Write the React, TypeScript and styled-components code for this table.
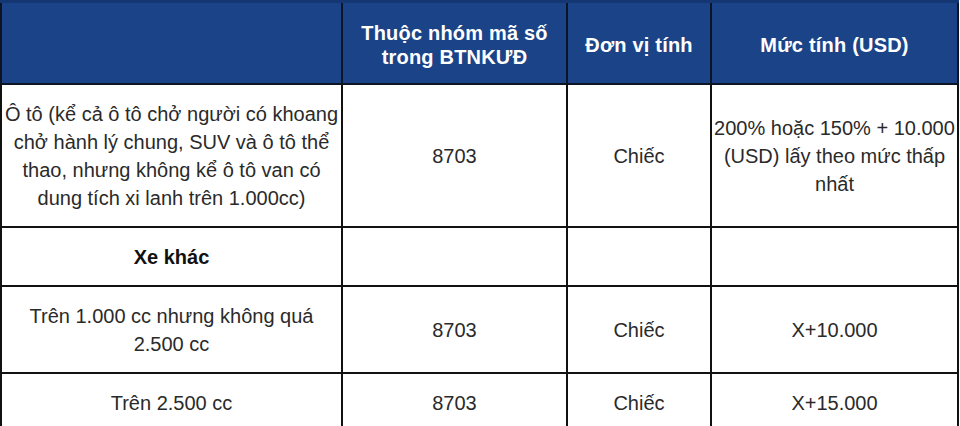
import styled, { createGlobalStyle } from 'styled-components';

const GlobalStyle = createGlobalStyle`
    html, body {
        margin: 0;
        padding: 0;
        background: #ffffff;
        overflow: hidden;
    }
    body {
        font-family: "Liberation Sans", Arial, sans-serif;
    }
`

const Page = styled.div`
    width: 960px;
    height: 426px;
    overflow: hidden;
    background: #fff;
`
const Table = styled.table`
    border-collapse: collapse;
    table-layout: fixed;
    width: 957px;
    font-family: "Liberation Sans", Arial, sans-serif;
`
const HeadRow = styled.tr`
    background: #1b4387;
    border-top: 3px solid #143672;
`
const HeadCell = styled.th<{ $w: number }>`
    width: ${(p) => p.$w}px;
    box-sizing: border-box;
    height: 82px;
    padding: 17px 2px 12px;
    border: 2px solid #0d1424;
    border-top: none;
    color: #ffffff;
    font-size: 20px;
    font-weight: bold;
    line-height: 24px;
    text-align: center;
    vertical-align: middle;
    letter-spacing: 0.2px;
`
const Row = styled.tr``
const Cell = styled.td<{ $bold?: boolean }>`
    padding: 15px 2px 14px;
    border: 2px solid #111;
    color: ${(p) => (p.$bold ? '#111' : '#2a2a2a')};
    font-size: 20px;
    font-weight: ${(p) => (p.$bold ? 'bold' : 'normal')};
    line-height: 28px;
    text-align: center;
    vertical-align: middle;
`

const Lines = ({ lines }: { lines: string[] }) => (
    <>
        {lines.map((l, i) => (
            <span key={i}>
                {l}
                {i < lines.length - 1 && <br />}
            </span>
        ))}
    </>
)

const App = (): JSX.Element => {
    return (
        <Page>
            <GlobalStyle />
            <Table>
                <thead>
                    <HeadRow>
                        <HeadCell $w={341}></HeadCell>
                        <HeadCell $w={225}>Thuộc nhóm mã số<br />trong BTNKƯĐ</HeadCell>
                        <HeadCell $w={144}>Đơn vị tính</HeadCell>
                        <HeadCell $w={247}>Mức tính (USD)</HeadCell>
                    </HeadRow>
                </thead>
                <tbody>
                    <Row>
                        <Cell>
                            <Lines lines={[
                                'Ô tô (kể cả ô tô chở người có khoang',
                                'chở hành lý chung, SUV và ô tô thể',
                                'thao, nhưng không kể ô tô van có',
                                'dung tích xi lanh trên 1.000cc)',
                            ]} />
                        </Cell>
                        <Cell>8703</Cell>
                        <Cell>Chiếc</Cell>
                        <Cell>
                            <Lines lines={[
                                '200% hoặc 150% + 10.000',
                                '(USD) lấy theo mức thấp',
                                'nhất',
                            ]} />
                        </Cell>
                    </Row>
                    <Row>
                        <Cell $bold>Xe khác</Cell>
                        <Cell></Cell>
                        <Cell></Cell>
                        <Cell></Cell>
                    </Row>
                    <Row>
                        <Cell>
                            <Lines lines={['Trên 1.000 cc nhưng không quá', '2.500 cc']} />
                        </Cell>
                        <Cell>8703</Cell>
                        <Cell>Chiếc</Cell>
                        <Cell>X+10.000</Cell>
                    </Row>
                    <Row>
                        <Cell>Trên 2.500 cc</Cell>
                        <Cell>8703</Cell>
                        <Cell>Chiếc</Cell>
                        <Cell>X+15.000</Cell>
                    </Row>
                </tbody>
            </Table>
        </Page>
    )
}
export default App;
